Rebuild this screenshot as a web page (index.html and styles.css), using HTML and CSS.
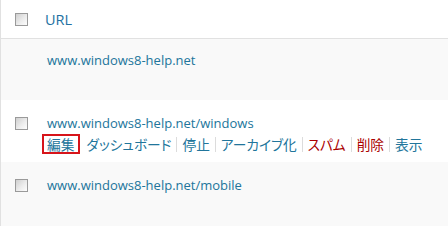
FILE: index.html
```html
<!DOCTYPE html>
<html lang="ja">
<head>
<meta charset="utf-8">
<link rel="stylesheet" href="styles.css">
</head>
<body>
<div class="table">
  <div class="row head">
    <div class="cb-col"><span class="cb"></span></div>
    <div class="main"><a class="col-title">URL</a></div>
  </div>
  <div class="row alt r1">
    <div class="cb-col"></div>
    <div class="main"><a class="url">www.windows8-help.net</a></div>
  </div>
  <div class="row r2">
    <div class="cb-col"><span class="cb"></span></div>
    <div class="main">
      <a class="url">www.windows8-help.net/windows</a>
      <div class="actions">
        <span class="edit">編集</span>
        <a class="act">ダッシュボード</a><span class="sep"></span><a class="act">停止</a><span class="sep"></span><a class="act">アーカイブ化</a><span class="sep"></span><a class="act red">スパム</a><span class="sep"></span><a class="act red">削除</a><span class="sep"></span><a class="act">表示</a>
      </div>
    </div>
  </div>
  <div class="row alt r3">
    <div class="cb-col"><span class="cb"></span></div>
    <div class="main"><a class="url">www.windows8-help.net/mobile</a></div>
  </div>
</div>
</body>
</html>
```
FILE: styles.css
```css
html, body {
  margin: 0;
  padding: 0;
  background: #fff;
  font-family: "Open Sans", "Noto Sans CJK JP", sans-serif;
  font-size: 13px;
  color: #333;
}
.table {
  border-left: 1px solid #e1e1e1;
  height: 226px;
  overflow: hidden;
}
.row {
  display: flex;
  align-items: flex-start;
}
.alt { background: #f9f9f9; }
.cb-col {
  width: 13px;
  padding-left: 14px;
  flex: none;
}
.cb {
  display: block;
  width: 11px;
  height: 11px;
  border: 1px solid #9a9a9a;
  background: linear-gradient(135deg, #cfcfcf 0%, #ececec 55%, #fdfdfd 100%);
}
.main {
  padding-left: 19px;
  flex: 1;
  min-width: 0;
}
.head {
  height: 38px;
  border-bottom: 1px solid #e1e1e1;
}
.head .cb-col { padding-top: 13px; }
.col-title {
  display: block;
  color: #2271a1;
  font-size: 14.5px;
  line-height: 20px;
  padding-top: 10px;
  margin-left: -2px;
}
.r1 { height: 61px; }
.r1 .main { padding-top: 13px; }
.r2 { height: 62px; }
.r2 .cb-col, .r3 .cb-col { padding-top: 17px; }
.r2 .main { padding-top: 15px; }
.r3 { height: 64px; }
.r3 .main { padding-top: 15px; }
.url {
  display: block;
  color: #21759b;
  line-height: 16px;
}
.actions {
  display: flex;
  align-items: center;
  white-space: nowrap;
  margin-left: -5px;
  margin-top: 3px;
  font-size: 13.7px;
  line-height: 15px;
  font-feature-settings: "palt";
}
.actions > * { flex: none; }
.edit {
  color: #21759b;
  border: 2px solid #d7141a;
  padding: 1px 4px 0 3px;
  margin-right: 6px;
}
.act { color: #21759b; }
.act.red { color: #a00; }
.sep {
  width: 1px;
  height: 15px;
  background: #dcdcdc;
  margin: 0 5px;
}
```
